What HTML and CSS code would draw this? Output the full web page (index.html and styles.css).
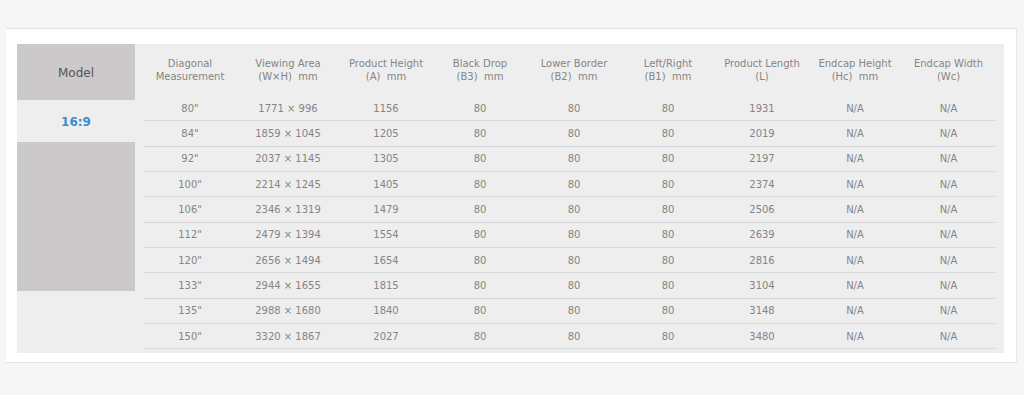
FILE: index.html
```html
<!DOCTYPE html>
<html>
<head>
<meta charset="utf-8">
<link rel="stylesheet" href="styles.css">
</head>
<body>
<div class="panel">
  <div class="spec">
    <div class="model">
      <div class="model-head">Model</div>
      <div class="model-ratio">16:9</div>
      <div class="model-pic"></div>
      <div class="model-rest"></div>
    </div>
    <div class="data">
      <div class="row head">
        <div>Diagonal<br>Measurement</div>
        <div>Viewing Area<br>(W×H)&nbsp; mm</div>
        <div>Product Height<br>(A)&nbsp; mm</div>
        <div>Black Drop<br>(B3)&nbsp; mm</div>
        <div>Lower Border<br>(B2)&nbsp; mm</div>
        <div>Left/Right<br>(B1)&nbsp; mm</div>
        <div>Product Length<br>(L)</div>
        <div>Endcap Height<br>(Hc)&nbsp; mm</div>
        <div>Endcap Width<br>(Wc)</div>
      </div>
      <div class="row"><div>80"</div><div>1771 × 996</div><div>1156</div><div>80</div><div>80</div><div>80</div><div>1931</div><div>N/A</div><div>N/A</div></div>
      <div class="row"><div>84"</div><div>1859 × 1045</div><div>1205</div><div>80</div><div>80</div><div>80</div><div>2019</div><div>N/A</div><div>N/A</div></div>
      <div class="row"><div>92"</div><div>2037 × 1145</div><div>1305</div><div>80</div><div>80</div><div>80</div><div>2197</div><div>N/A</div><div>N/A</div></div>
      <div class="row"><div>100"</div><div>2214 × 1245</div><div>1405</div><div>80</div><div>80</div><div>80</div><div>2374</div><div>N/A</div><div>N/A</div></div>
      <div class="row"><div>106"</div><div>2346 × 1319</div><div>1479</div><div>80</div><div>80</div><div>80</div><div>2506</div><div>N/A</div><div>N/A</div></div>
      <div class="row"><div>112"</div><div>2479 × 1394</div><div>1554</div><div>80</div><div>80</div><div>80</div><div>2639</div><div>N/A</div><div>N/A</div></div>
      <div class="row"><div>120"</div><div>2656 × 1494</div><div>1654</div><div>80</div><div>80</div><div>80</div><div>2816</div><div>N/A</div><div>N/A</div></div>
      <div class="row"><div>133"</div><div>2944 × 1655</div><div>1815</div><div>80</div><div>80</div><div>80</div><div>3104</div><div>N/A</div><div>N/A</div></div>
      <div class="row"><div>135"</div><div>2988 × 1680</div><div>1840</div><div>80</div><div>80</div><div>80</div><div>3148</div><div>N/A</div><div>N/A</div></div>
      <div class="row"><div>150"</div><div>3320 × 1867</div><div>2027</div><div>80</div><div>80</div><div>80</div><div>3480</div><div>N/A</div><div>N/A</div></div>
    </div>
  </div>
</div>
</body>
</html>
```

FILE: styles.css
```css
html, body {
  margin: 0;
  padding: 0;
  background: #f6f6f6;
  height: 100%;
}
body {
  font-family: "DejaVu Sans", Verdana, sans-serif;
  font-size: 10px;
  color: #858585;
  overflow: hidden;
}
.panel {
  margin: 28px 0 0 6px;
  width: 1011px;
  background: #fff;
  border-top: 1px solid #e2e2e2;
  border-bottom: 1px solid #e2e2e2;
  border-right: 1px solid #e6e6e6;
  padding: 15px 12px 9px 11px;
  box-sizing: border-box;
}
.spec {
  display: flex;
  background: #eeeeee;
  padding-right: 9px;
}
.model {
  width: 118px;
  flex: none;
  display: flex;
  flex-direction: column;
  margin-right: 9px;
}
.model-head {
  height: 56px;
  background: #cbc9c9;
  display: flex;
  align-items: center;
  justify-content: center;
  font-size: 12px;
  color: #555;
  padding-top: 1px;
  box-sizing: border-box;
}
.model-ratio {
  height: 42px;
  display: flex;
  align-items: center;
  justify-content: center;
  font-size: 12px;
  font-weight: bold;
  color: #3d8bd0;
  padding-top: 2px;
  box-sizing: border-box;
}
.model-pic {
  height: 149px;
  background: #cbc9c9;
}
.model-rest {
  flex: 1;
}
.data {
  flex: 1;
  padding-bottom: 3.7px;
}
.row {
  display: grid;
  grid-template-columns: 92px 104px 92px 96px 92px 96px 92px 94px minmax(0, 1fr);
  height: 25.33px;
  box-sizing: border-box;
  border-bottom: 1px solid #d6d6d6;
  align-items: center;
  text-align: center;
}
.row.head {
  height: 52px;
  border-bottom: none;
  line-height: 13px;
  padding-bottom: 1px;
}
```
